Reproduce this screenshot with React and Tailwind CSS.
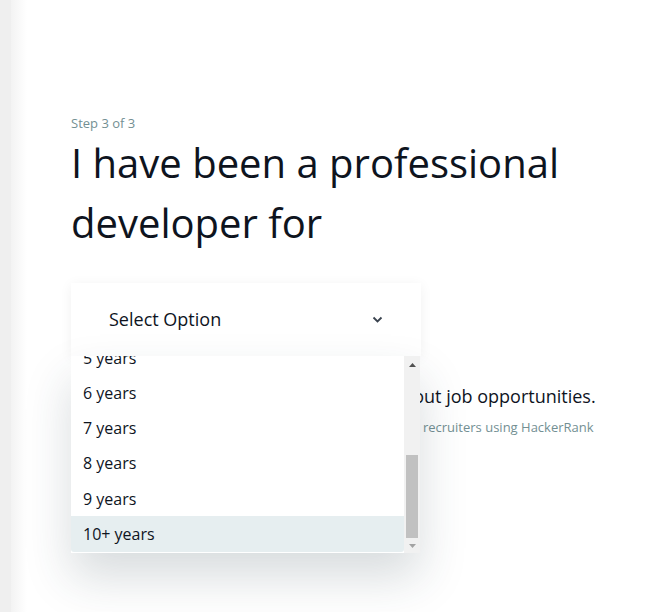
import React from "react";

const years = ["5 years", "6 years", "7 years", "8 years", "9 years", "10+ years"];

const App = () => {
  return (
    <div className="flex min-h-[612px] w-full bg-white" style={{ fontFamily: "'Open Sans', 'Noto Sans', sans-serif" }}>
      <div className="w-[11px] shrink-0 bg-[#efefef]" />
      <div className="w-[16px] shrink-0 bg-gradient-to-r from-[#f3f3f3] to-white" />
      <div className="flex-1 pl-[44px] pt-[114px]">
        <p className="text-[13px] leading-[18px] text-[#738f93]">Step 3 of 3</p>
        <h1 className="mt-[1px] text-[40px] leading-[60px] text-[#0e141e]">
          I have been a professional
          <br />
          developer for
        </h1>

        <div className="relative mt-[30px] w-[350px]">
          <div className="flex h-[73px] items-center justify-between bg-white pl-[38px] pr-[38px] shadow-[0_2px_12px_rgba(0,0,0,0.06)]">
            <span className="text-[18px] text-[#0e141e]">Select Option</span>
            <svg width="11" height="7" viewBox="0 0 11 7" fill="none">
              <path d="M1.5 1.5l4 4 4-4" stroke="#39424e" strokeWidth="1.8" />
            </svg>
          </div>

          <div className="pt-[27px] pl-[21px]">
            <p className="w-[560px] text-[18px] leading-[26px] text-[#0e141e]">
              I'm open to hearing from recruiters about job opportunities.
            </p>
            <p className="mt-[9px] w-[560px] text-[13px] leading-[18px] text-[#738f93]">
              Your profile will be made visible to top companies and recruiters using HackerRank
            </p>
          </div>

          <div className="absolute left-0 top-[73px] z-10 flex h-[197px] w-[349px] bg-white shadow-[0_24px_44px_rgba(40,60,70,0.18)]">
            <div className="h-full flex-1 overflow-hidden pb-[2px]">
              <div className="-mt-[16px]">
                {years.map((y) => (
                  <div
                    key={y}
                    className={`flex h-[35.25px] items-center pl-[12px] text-[16px] text-[#0e141e] ${
                      y === "10+ years" ? "rounded-b-[3px] bg-[#e6eef0]" : ""
                    }`}
                  >
                    {y}
                  </div>
                ))}
              </div>
            </div>
            <div className="flex w-[16px] flex-col items-center bg-[#f1f1f1]">
              <div className="flex h-[17px] items-center justify-center">
                <svg width="7" height="4" viewBox="0 0 7 4">
                  <path d="M0 4L3.5 0L7 4Z" fill="#505050" />
                </svg>
              </div>
              <div className="mt-[82px] h-[83px] w-[12px] bg-[#c1c1c1]" />
              <div className="flex flex-1 items-center justify-center">
                <svg width="7" height="4" viewBox="0 0 7 4">
                  <path d="M0 0L3.5 4L7 0Z" fill="#a3a3a3" />
                </svg>
              </div>
            </div>
          </div>
        </div>
      </div>
    </div>
  );
};

export default App;
